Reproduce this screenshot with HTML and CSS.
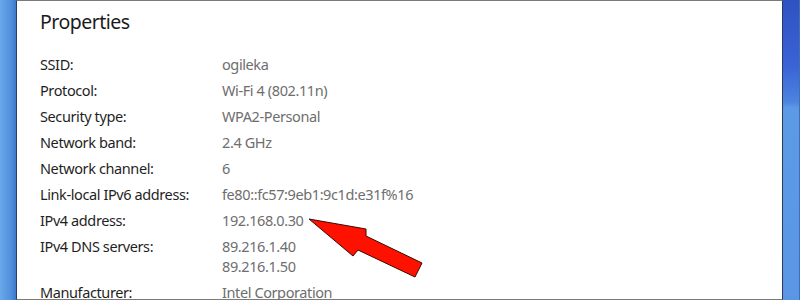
FILE: index.html
```html
<!DOCTYPE html>
<html lang="en">
<head>
    <meta charset="UTF-8">
    <meta name="viewport" content="width=device-width, initial-scale=1.0">
    <title>Wi-Fi Properties</title>
    <link rel="stylesheet" href="styles.css">
</head>
<body>
    <div class="desktop">
        <div class="wallpaper wallpaper-left"></div>

        <div class="window">
            <h1 class="title">Properties</h1>

            <div class="props">
                <div class="row"><span class="label">SSID:</span><span class="value">ogileka</span></div>
                <div class="row"><span class="label">Protocol:</span><span class="value">Wi-Fi 4 (802.11n)</span></div>
                <div class="row"><span class="label">Security type:</span><span class="value">WPA2-Personal</span></div>
                <div class="row"><span class="label">Network band:</span><span class="value">2.4 GHz</span></div>
                <div class="row"><span class="label">Network channel:</span><span class="value">6</span></div>
                <div class="row"><span class="label">Link-local IPv6 address:</span><span class="value">fe80::fc57:9eb1:9c1d:e31f%16</span></div>
                <div class="row"><span class="label">IPv4 address:</span><span class="value">192.168.0.30</span></div>
                <div class="row"><span class="label">IPv4 DNS servers:</span><span class="value">89.216.1.40<br>89.216.1.50</span></div>
                <div class="row"><span class="label">Manufacturer:</span><span class="value">Intel Corporation</span></div>
            </div>

            <!-- red arrow pointing at the IPv4 address -->
            <svg class="arrow" width="800" height="300" viewBox="0 0 800 300">
                <polygon points="309,219 366,229 366,236 422,263 415,277 358,250 353,256" fill="#ff1100" stroke="#3a0a05" stroke-width="1" stroke-linejoin="miter"/>
            </svg>
        </div>

        <div class="wallpaper wallpaper-right"></div>
    </div>
</body>
</html>
```

FILE: styles.css
```css
/* Base styles */
body {
    margin: 0;
    padding: 0;
    font-family: 'Noto Sans', 'Open Sans', sans-serif;
    background-color: #ffffff;
}

.desktop {
    display: flex;
    width: 800px;
    height: 300px;
    overflow: hidden;
}

/* Desktop wallpaper strips */
.wallpaper {
    flex: none;
}

.wallpaper-left {
    width: 16px;
    background: linear-gradient(to right, #6aa8ea, #4f8fdc 70%, #3d79c8);
}

.wallpaper-right {
    width: 16px;
    background: linear-gradient(to bottom, #2f52c0 0%, #3a63d6 22%, #4d84df 34%, #5c9ae6 36%, #5a96e4 100%);
    border-right: 1px solid #3f6fb8;
}

/* Window */
.window {
    position: relative;
    flex: 1;
    background: #ffffff;
    border-top: 1px solid #7a7a7a;
    border-bottom: 1px solid #7a7a7a;
    border-left: 1px solid #27406a;
    border-right: 1px solid #2c3a55;
    padding: 0 0 0 23px;
}

.title {
    margin: 0;
    padding-top: 7px;
    font-size: 19.5px;
    font-weight: normal;
    line-height: 28px;
    letter-spacing: -0.5px;
    color: #1b1b1b;
}

.props {
    margin-top: 18px;
    display: flex;
    flex-direction: column;
    gap: 6px;
}

.row {
    display: flex;
    font-size: 14.5px;
    line-height: 20px;
    letter-spacing: -0.4px;
}

.label {
    width: 182px;
    flex: none;
    color: #1f1f1f;
}

.value {
    color: #6e6e6e;
}

/* Arrow overlay */
.arrow {
    position: absolute;
    left: -17px;
    top: -1px;
    pointer-events: none;
}
```
